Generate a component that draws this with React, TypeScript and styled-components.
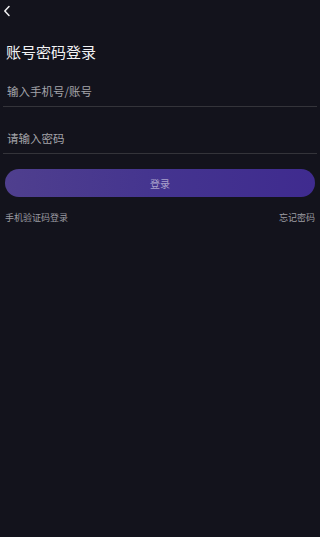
import styled, { createGlobalStyle } from "styled-components";

const GlobalStyle = createGlobalStyle`
  html, body {
    margin: 0;
    padding: 0;
    background: #13131c;
  }
  body {
    font-family: "Noto Sans CJK SC", "Noto Sans", sans-serif;
  }
  * {
    box-sizing: border-box;
  }
`;

const Page = styled.div`
  min-height: 537px;
  background: #13131c;
  padding: 0 3px;
  display: flex;
  flex-direction: column;
`;

const Header = styled.div`
  height: 22px;
  display: flex;
  align-items: center;
`;

const BackButton = styled.button`
  border: 0;
  background: none;
  padding: 0;
  margin-left: -2px;
  width: 12px;
  height: 22px;
  display: flex;
  align-items: center;
  justify-content: center;
  cursor: pointer;
`;

const Title = styled.h1`
  margin: 22px 0 0;
  padding-left: 3px;
  font-size: 15px;
  line-height: 16px;
  font-weight: 400;
  color: #f2f2f4;
`;

const Field = styled.label`
  display: flex;
  padding: 23px 4px 7px;
  border-bottom: 1px solid #34343a;
`;

const Input = styled.input`
  flex: 1;
  border: 0;
  outline: none;
  background: transparent;
  padding: 0;
  height: 16px;
  font-family: inherit;
  font-size: 11.5px;
  line-height: 16px;
  color: #e6e6ea;

  &::placeholder {
    color: #a4a4aa;
  }
`;

const SubmitButton = styled.button`
  margin: 15px 2px 0;
  height: 28px;
  border: 0;
  border-radius: 14px;
  background: linear-gradient(90deg, #4f3f8e 0%, #44348f 50%, #3f2b8f 100%);
  color: #aaa2cc;
  font-family: inherit;
  font-size: 10px;
  cursor: pointer;
`;

const LinkRow = styled.div`
  margin-top: 14px;
  padding: 0 2px;
  display: flex;
  justify-content: space-between;
`;

const TextLink = styled.a`
  font-size: 9px;
  line-height: 14px;
  color: #9c9ca2;
  text-decoration: none;
  cursor: pointer;
`;

export default function App() {
  return (
    <>
      <GlobalStyle />
      <Page>
        <Header>
          <BackButton aria-label="返回">
            <svg width="8" height="12" viewBox="0 0 8 12" fill="none">
              <path
                d="M6 1.5L1.8 6L6 10.5"
                stroke="#f0f0f2"
                strokeWidth="1.5"
                strokeLinecap="round"
                strokeLinejoin="round"
              />
            </svg>
          </BackButton>
        </Header>
        <Title>账号密码登录</Title>
        <Field>
          <Input placeholder="输入手机号/账号" />
        </Field>
        <Field>
          <Input type="password" placeholder="请输入密码" />
        </Field>
        <SubmitButton>登录</SubmitButton>
        <LinkRow>
          <TextLink>手机验证码登录</TextLink>
          <TextLink>忘记密码</TextLink>
        </LinkRow>
      </Page>
    </>
  );
}
